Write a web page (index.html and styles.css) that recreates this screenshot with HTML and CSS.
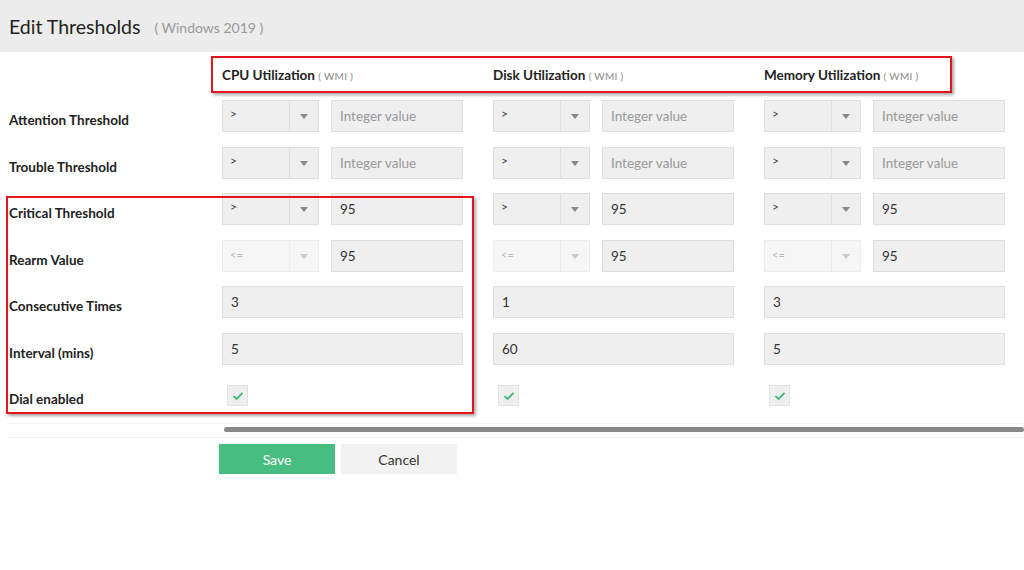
FILE: index.html
```html
<!DOCTYPE html>
<html>
  <head>
    <title>Edit Thresholds</title>
    <link rel="stylesheet" href="styles.css">
  </head>
  <body>

    <div class="page-header">
      <span class="title">Edit Thresholds</span>
      <span class="subtitle">( Windows 2019 )</span>
    </div>

    <div class="form-grid">
      <div></div>
      <div class="col-head">CPU Utilization <span class="unit">( WMI )</span></div>
      <div class="col-head">Disk Utilization <span class="unit">( WMI )</span></div>
      <div class="col-head">Memory Utilization <span class="unit">( WMI )</span></div>

      <div class="row-label">Attention Threshold</div>
      <div class="pair"><div class="select"><span>&gt;</span><span class="arrow"></span></div><div class="field empty">Integer value</div></div>
      <div class="pair"><div class="select"><span>&gt;</span><span class="arrow"></span></div><div class="field empty">Integer value</div></div>
      <div class="pair"><div class="select"><span>&gt;</span><span class="arrow"></span></div><div class="field empty">Integer value</div></div>

      <div class="row-label">Trouble Threshold</div>
      <div class="pair"><div class="select"><span>&gt;</span><span class="arrow"></span></div><div class="field empty">Integer value</div></div>
      <div class="pair"><div class="select"><span>&gt;</span><span class="arrow"></span></div><div class="field empty">Integer value</div></div>
      <div class="pair"><div class="select"><span>&gt;</span><span class="arrow"></span></div><div class="field empty">Integer value</div></div>

      <div class="row-label">Critical Threshold</div>
      <div class="pair"><div class="select"><span>&gt;</span><span class="arrow"></span></div><div class="field">95</div></div>
      <div class="pair"><div class="select"><span>&gt;</span><span class="arrow"></span></div><div class="field">95</div></div>
      <div class="pair"><div class="select"><span>&gt;</span><span class="arrow"></span></div><div class="field">95</div></div>

      <div class="row-label">Rearm Value</div>
      <div class="pair"><div class="select disabled"><span>&lt;=</span><span class="arrow"></span></div><div class="field">95</div></div>
      <div class="pair"><div class="select disabled"><span>&lt;=</span><span class="arrow"></span></div><div class="field">95</div></div>
      <div class="pair"><div class="select disabled"><span>&lt;=</span><span class="arrow"></span></div><div class="field">95</div></div>

      <div class="row-label">Consecutive Times</div>
      <div class="field">3</div>
      <div class="field">1</div>
      <div class="field">3</div>

      <div class="row-label">Interval (mins)</div>
      <div class="field">5</div>
      <div class="field">60</div>
      <div class="field">5</div>

      <div class="row-label">Dial enabled</div>
      <div class="check-cell"><span class="checkbox"><svg width="12" height="10" viewBox="0 0 12 10"><path d="M1.5 5.2 L4.6 8 L10.5 1.8" fill="none" stroke="#3dba72" stroke-width="1.8"/></svg></span></div>
      <div class="check-cell"><span class="checkbox"><svg width="12" height="10" viewBox="0 0 12 10"><path d="M1.5 5.2 L4.6 8 L10.5 1.8" fill="none" stroke="#3dba72" stroke-width="1.8"/></svg></span></div>
      <div class="check-cell"><span class="checkbox"><svg width="12" height="10" viewBox="0 0 12 10"><path d="M1.5 5.2 L4.6 8 L10.5 1.8" fill="none" stroke="#3dba72" stroke-width="1.8"/></svg></span></div>
    </div>

    <div class="scroll-track"><div class="scroll-thumb"></div></div>

    <div class="actions">
      <button class="btn save">Save</button>
      <button class="btn cancel">Cancel</button>
    </div>

    <div class="mark mark-head"></div>
    <div class="mark mark-rows"></div>

  </body>
</html>
```

FILE: styles.css
```css
body {
  margin: 0;
  background-color: white;
  font-family: Lato, "Open Sans", sans-serif;
  color: #333;
  position: relative;
}

.page-header {
  height: 52px;
  background-color: #ececec;
  padding-left: 9px;
  display: flex;
  align-items: center;
  gap: 14px;
}
.title {
  font-size: 19.5px;
  color: #222;
}
.subtitle {
  font-size: 14px;
  color: #999;
  margin-top: 3px;
}

.form-grid {
  display: grid;
  grid-template-columns: 183px 241px 241px 241px;
  column-gap: 30px;
  row-gap: 14.5px;
  padding-left: 9px;
  margin-top: 1.5px;
}

.col-head {
  height: 32px;
  padding-top: 10px;
  box-sizing: border-box;
  font-size: 13.5px;
  font-weight: bold;
  line-height: 22px;
  color: #222;
}
.unit {
  font-size: 10px;
  font-weight: normal;
  color: #888;
  letter-spacing: 0.3px;
}

.row-label {
  font-size: 13.5px;
  font-weight: bold;
  line-height: 14px;
  padding-top: 13px;
  color: #222;
}

.pair {
  display: flex;
  gap: 12px;
}

.select {
  width: 97px;
  height: 32px;
  box-sizing: border-box;
  border: 1px solid #dedede;
  background-color: #efefef;
  display: flex;
  font-size: 12px;
  color: #444;
}
.select span:first-child {
  flex: 1;
  padding: 5px 0 0 7px;
}
.select .arrow {
  width: 28px;
  border-left: 1px solid #dedede;
  position: relative;
}
.select .arrow::after {
  content: "";
  position: absolute;
  left: 10px;
  top: 13px;
  border-left: 4px solid transparent;
  border-right: 4px solid transparent;
  border-top: 5px solid #888;
}
.select.disabled {
  background-color: #f6f6f6;
  border-color: #ececec;
  color: #bbb;
  font-size: 11px;
}
.select.disabled span:first-child {
  padding-top: 7px;
}
.select.disabled .arrow {
  border-left-color: #ececec;
}
.select.disabled .arrow::after {
  border-top-color: #c8c8c8;
}

.field {
  flex: 1;
  height: 32px;
  box-sizing: border-box;
  border: 1px solid #dedede;
  background-color: #efefef;
  padding-left: 8px;
  font-size: 13.5px;
  line-height: 30px;
  color: #333;
}
.field.empty {
  color: #999;
}

.check-cell {
  padding: 6px 0 0 5px;
}
.checkbox {
  width: 21px;
  height: 21px;
  box-sizing: border-box;
  border: 1px solid #e2e2e2;
  background-color: #efefef;
  display: flex;
  align-items: center;
  justify-content: center;
}

.scroll-track {
  margin-top: 17px;
  margin-left: 8px;
  padding: 3px 0 5px 216px;
  border-top: 1px solid #f4f4f4;
  border-bottom: 1px solid #eeeeee;
}
.scroll-thumb {
  height: 5px;
  background-color: #888;
  border-radius: 3px;
}

.actions {
  display: flex;
  gap: 6px;
  padding-left: 219px;
  margin-top: 6px;
}
.btn {
  width: 116px;
  height: 30px;
  border: none;
  font-family: Lato, "Open Sans", sans-serif;
  font-size: 14px;
}
.save {
  background-color: #47bd80;
  color: white;
}
.cancel {
  background-color: #f2f2f2;
  color: #333;
}

.mark {
  position: absolute;
  border: 2px solid #e8141c;
  box-shadow: 2px 2px 3px rgba(0, 0, 0, 0.35);
  box-sizing: border-box;
}
.mark-head {
  left: 211px;
  top: 56px;
  width: 741px;
  height: 37px;
}
.mark-rows {
  left: 6px;
  top: 196px;
  width: 468px;
  height: 218px;
}
```
